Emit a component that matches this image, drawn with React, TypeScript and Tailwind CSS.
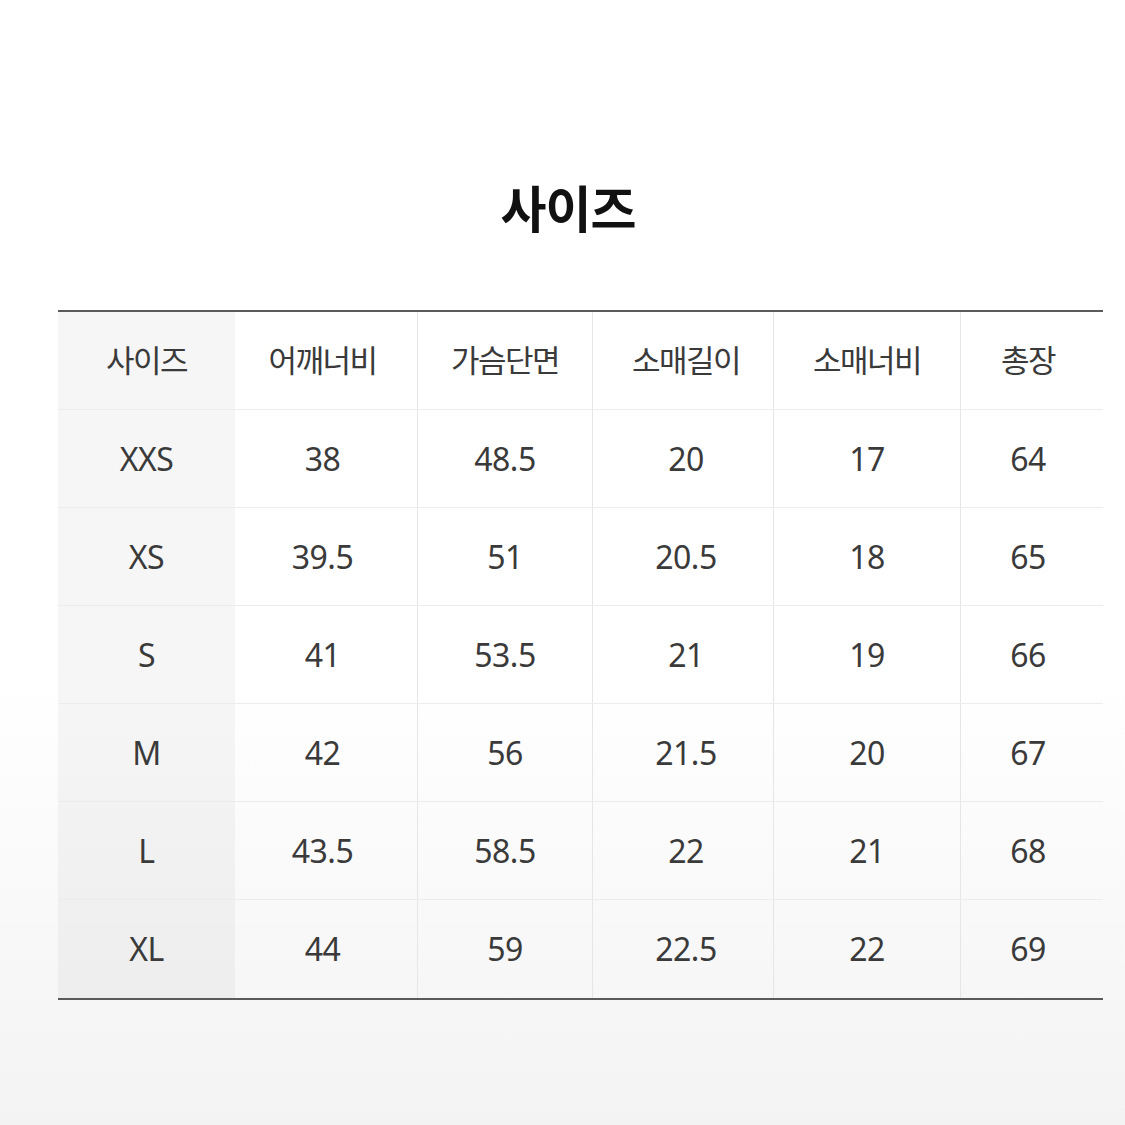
import React from "react";

const headers = ["사이즈", "어깨너비", "가슴단면", "소매길이", "소매너비", "총장"];
const rows: string[][] = [
  ["XXS", "38", "48.5", "20", "17", "64"],
  ["XS", "39.5", "51", "20.5", "18", "65"],
  ["S", "41", "53.5", "21", "19", "66"],
  ["M", "42", "56", "21.5", "20", "67"],
  ["L", "43.5", "58.5", "22", "21", "68"],
  ["XL", "44", "59", "22.5", "22", "69"],
];

const colPad = ["", "pr-[7px]", "", "pl-[6px]", "", "pr-[8px]"];

function Row({ cells, header, last }: { cells: string[]; header?: boolean; last?: boolean }) {
  return (
    <div
      className={`grid grid-cols-[177px_182px_175px_181px_187px_143px] h-[98px] ${
        last ? "" : "border-b border-[#ececec]"
      }`}
    >
      {cells.map((c, i) => (
        <div
          key={i}
          className={`flex items-center justify-center text-[#3a3a3a] ${colPad[i]} ${
            i === 0 ? "bg-[rgba(0,0,0,0.035)]" : ""
          } ${i >= 2 ? "border-l border-[#e6e6e6]" : ""} ${
            header ? "text-[31px] tracking-[-1.5px]" : "text-[32px] tracking-[-0.5px]"
          }`}
        >
          {c}
        </div>
      ))}
    </div>
  );
}

export default function App() {
  return (
    <div
      className="w-[1125px] h-[1125px] bg-[linear-gradient(to_bottom,#ffffff_0%,#ffffff_60%,#f3f3f3_100%)] flex flex-col items-center"
      style={{ fontFamily: '"Noto Sans", "Noto Sans CJK KR", sans-serif' }}
    >
      <div className="h-[310px] w-full flex justify-center pl-[11px] pt-[181px]">
        <h1
          className="text-[50px] font-bold text-[#111] leading-none tracking-[-1px]"
          style={{ fontFamily: '"Noto Sans CJK KR", sans-serif' }}
        >
          사이즈
        </h1>
      </div>
      <div className="w-[1045px] self-start ml-[58px] border-t-2 border-b-2 border-[#5a5a5a]">
        <Row cells={headers} header />
        {rows.map((r, i) => (
          <Row key={i} cells={r} last={i === rows.length - 1} />
        ))}
      </div>
    </div>
  );
}
